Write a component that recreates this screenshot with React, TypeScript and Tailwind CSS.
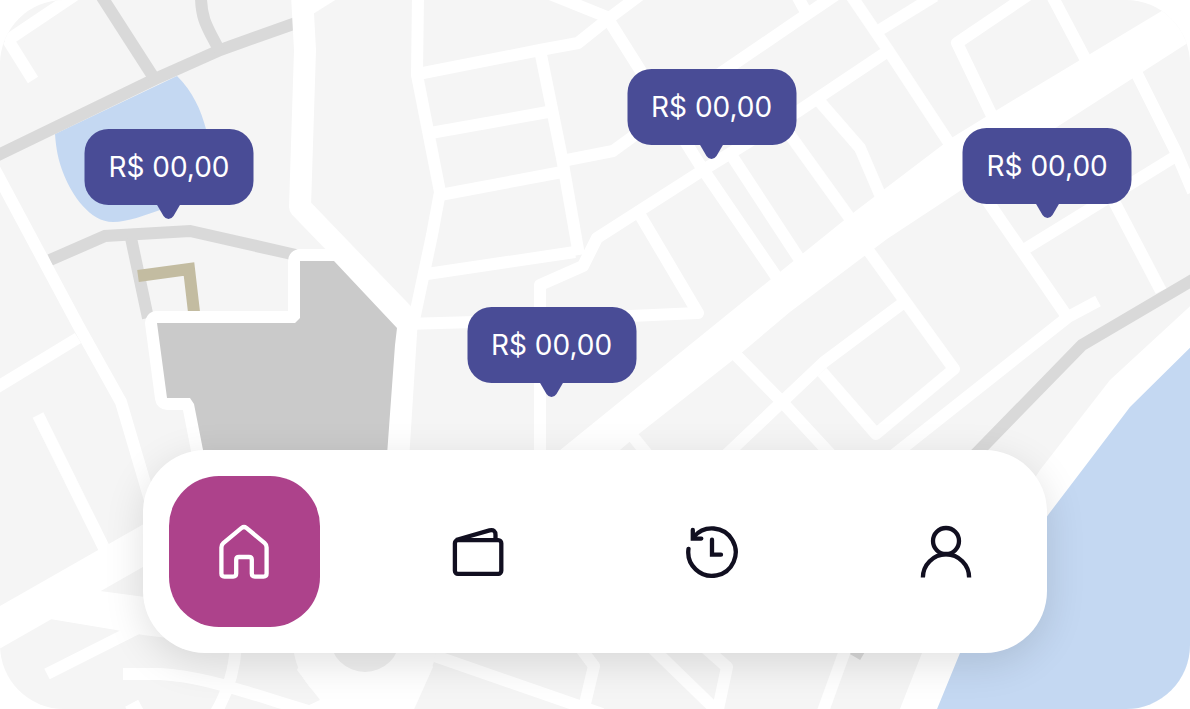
import type { ReactNode } from "react";
import clsx from "clsx";

interface Pin {
  id: string;
  label: string;
  // Position on the map, in percent of its width and height
  x: number;
  y: number;
}

interface NavItem {
  id: string;
  label: string;
  icon: ReactNode;
}

const PINS: Pin[] = [
  { id: "lake", label: "R$ 00,00", x: 14.2, y: 18.2 },
  { id: "north", label: "R$ 00,00", x: 59.8, y: 9.8 },
  { id: "east", label: "R$ 00,00", x: 88, y: 18 },
  { id: "center", label: "R$ 00,00", x: 46.35, y: 43.3 },
];

// Streets that share the same width
const STREETS = [
  "M75 -5 L5 42",
  "M8 40 L33 80",
  "M-6 168 L78 325 L121 402 L150 500",
  "M78 338 L-4 388",
  "M38 415 L104 548",
  "M305 12 L340 -10",
  "M418 -5 L417 75 L440 192 L432 235 L414 320",
  "M418 74 L540 50 L578 43 L608 19 L640 -5",
  "M540 -10 L607 17",
  "M608 19 L700 165 L782 285",
  "M728 150 L800 260",
  "M540 50 L562 158 L579 255",
  "M425 134 L548 112",
  "M440 195 L562 172",
  "M562 161 L613 151 L650 124",
  "M427 274 L575 252",
  "M888 51 L797 112 L700 172 L597 238 L583 266 L540 285 V455",
  "M640 215 L698 313 L540 320 L405 324",
  "M715 77 L797 21 L840 -8",
  "M796 -6 L806 12",
  "M850 -6 L888 50 L955 152",
  "M878 31 L935 -4",
  "M1028 -5 L957 43 L994 120",
  "M1051 -6 L1088 64",
  "M1134 68 L1176 152 L1193 192",
  "M1176 156 L1025 249",
  "M980 190 L1066 315",
  "M1098 301 L1068 317 L890 458",
  "M1108 190 L1161 291",
  "M820 102 L860 148 L884 204",
  "M785 128 L854 224",
  "M868 250 L954 369 L876 434 L822 372",
  "M903 303 L824 362 L725 456",
  "M733 352 L784 404 L834 458",
  "M626 428 L652 460",
  "M47 674 L150 622",
  "M123 674 H160 C205 676 250 694 325 716",
  "M236 645 Q234 682 215 714",
  "M128 712 L141 705",
  "M435 656 L602 714",
  "M576 642 L594 666 L583 712",
  "M646 642 L714 708",
  "M702 645 L727 667 L717 714",
  "M847 645 L822 714",
];

function CityMap() {
  return (
    <svg
      viewBox="0 0 1190 709"
      preserveAspectRatio="xMidYMid slice"
      className="absolute inset-0 h-full w-full"
      aria-hidden="true"
    >
      <rect width="1190" height="709" fill="#f5f5f5" />

      {/* Lake */}
      <path
        d="M55 134 L177 76 C193 92 201 110 206 129 C212 165 195 200 160 210 C145 215 128 222 113 222 C90 222 72 195 64 175 C58 160 56 148 55 134 Z"
        fill="#c4d8f2"
      />

      {/* Secondary roads */}
      <g fill="none" stroke="#d9d9d9" strokeWidth="12">
        <path d="M-4 156 L155 79 L220 50 L296 23" />
        <path d="M100 -6 L154 78" />
        <path d="M201 -4 C201 20 208 28 219 50" />
        <path d="M50 260 L105 236 L190 231 L296 255" />
        <path d="M131 238 L148 318" />
        <path d="M1196 278 L1082 345 L970 460 L855 657" />
      </g>
      <path d="M138 276 L189 269 L194 312" fill="none" stroke="#c3bca1" strokeWidth="12" />

      {/* Streets */}
      <g fill="none" stroke="#fff" strokeWidth="12" strokeLinejoin="round">
        {STREETS.map((d) => (
          <path key={d} d={d} />
        ))}
      </g>
      <g fill="none" stroke="#fff" strokeWidth="22" strokeLinejoin="round">
        <path d="M302 -5 L305 50 L300 207 L407 318 L398 460" />
      </g>

      {/* Avenues */}
      <path
        d="M1200 -14 L1160 12 L997 110 L953 137 L853 213 L770 280 L554 455 L614 455 L640 433 L733 360 L790 312 L887 239 L1060 125 L1200 35 Z"
        fill="#fff"
      />
      <path d="M-10 633 L160 536" fill="none" stroke="#fff" strokeWidth="37" />
      <path d="M30 620 L100 591 L160 599 L200 642 L143 635 L110 629 L50 619 Z" fill="#fff" />

      {/* Roundabout */}
      <path d="M297 670 L320 700 L290 714 H412 L433 667 L400 600 H330 Z" fill="#fff" />
      <circle cx="365" cy="641" r="72" fill="#fff" />
      <circle cx="365" cy="637" r="35" fill="#f0f0f0" />

      {/* Block */}
      <path
        d="M300 261 H334 L397 328 L395 345 L387 455 H204 L194 404 L190 398 H167 L157 323 H295 L300 318 Z"
        fill="#cacaca"
        stroke="#fff"
        strokeWidth="24"
        strokeLinejoin="round"
        paintOrder="stroke"
      />

      {/* Beach and sea */}
      <path d="M1200 297 L1110 380 L1040 470 L922 653 L898 714 H1200 Z" fill="#fff" />
      <path d="M1200 338 L1130 407 L1083 469 L1048 515 L960 653 L935 714 H1200 Z" fill="#c4d8f2" />
    </svg>
  );
}

function PricePin({ pin }: { pin: Pin }) {
  return (
    <button
      type="button"
      className="absolute flex h-[76px] w-[169px] -translate-x-1/2 items-center justify-center rounded-3xl bg-[#494c96] text-[28px] leading-8 text-white [font-optical-sizing:none]"
      style={{ left: `${pin.x}%`, top: `${pin.y}%` }}
    >
      {pin.label}
      <svg
        viewBox="0 0 24 15"
        className="absolute top-full left-1/2 -mt-px h-[15px] w-6 -translate-x-1/2"
        aria-hidden="true"
      >
        <path d="M0 0 H24 L17 12 Q15 15 12 15 Q9 15 7 12 Z" fill="#494c96" />
      </svg>
    </button>
  );
}

function Icon({ children }: { children: ReactNode }) {
  return (
    <svg
      viewBox="0 0 56 56"
      className="size-14"
      fill="none"
      stroke="currentColor"
      strokeWidth="4.3"
      aria-hidden="true"
    >
      {children}
    </svg>
  );
}

const NAV_ITEMS: NavItem[] = [
  {
    id: "home",
    label: "Início",
    icon: (
      <Icon>
        <path d="M5.4 23.5 Q5.4 20.8 7.3 19.2 L25.6 3.9 Q28 2.2 30.4 3.9 L48.7 19.2 Q50.6 20.8 50.6 23.5 V49.6 Q50.6 52.6 47.6 52.6 H38.8 Q35.8 52.6 35.8 49.6 V35.6 Q35.8 33 33 33 H23 Q20.2 33 20.2 35.6 V49.6 Q20.2 52.6 17.2 52.6 H8.4 Q5.4 52.6 5.4 49.6 Z" />
      </Icon>
    ),
  },
  {
    id: "wallet",
    label: "Carteira",
    icon: (
      <Icon>
        <rect x="4.9" y="16.2" width="46.4" height="33.6" rx="3" />
        <path d="M6 16 L39.5 6.4 Q45.5 5 45.5 11 V16" />
      </Icon>
    ),
  },
  {
    id: "history",
    label: "Histórico",
    icon: (
      <Icon>
        <g strokeLinecap="round">
          <path d="M4.5 24.8 A23.7 23.7 0 1 0 9.8 12.9" />
          <path d="M8.8 6 V14.6 H17.3" />
          <path d="M28 15.7 V30.7 H37" />
        </g>
      </Icon>
    ),
  },
  {
    id: "profile",
    label: "Perfil",
    icon: (
      <Icon>
        <circle cx="28" cy="17" r="13" />
        <path d="M4.9 53.5 A23.1 23.1 0 0 1 51.1 53.5" />
      </Icon>
    ),
  },
];

function NavBar({ active }: { active: string }) {
  return (
    <nav className="relative flex w-[76%] justify-between rounded-[62px] bg-white p-[26px] shadow-[0_10px_40px_rgba(0,0,0,0.12)]">
      {NAV_ITEMS.map((item) => (
        <a
          key={item.id}
          href={`#${item.id}`}
          aria-label={item.label}
          aria-current={item.id === active ? "page" : undefined}
          className={clsx(
            "flex aspect-square w-[151px] items-center justify-center rounded-[50px]",
            item.id === active ? "bg-[#ad428b] text-white" : "text-[#110f20]",
          )}
        >
          {item.icon}
        </a>
      ))}
    </nav>
  );
}

export default function App() {
  return (
    <div className="bg-white font-['Inter',sans-serif]">
      <main className="relative flex aspect-[1190/709] w-full flex-col items-center justify-end overflow-hidden rounded-[64px] pb-14">
        <CityMap />
        {PINS.map((pin) => (
          <PricePin key={pin.id} pin={pin} />
        ))}
        <NavBar active="home" />
      </main>
    </div>
  );
}
